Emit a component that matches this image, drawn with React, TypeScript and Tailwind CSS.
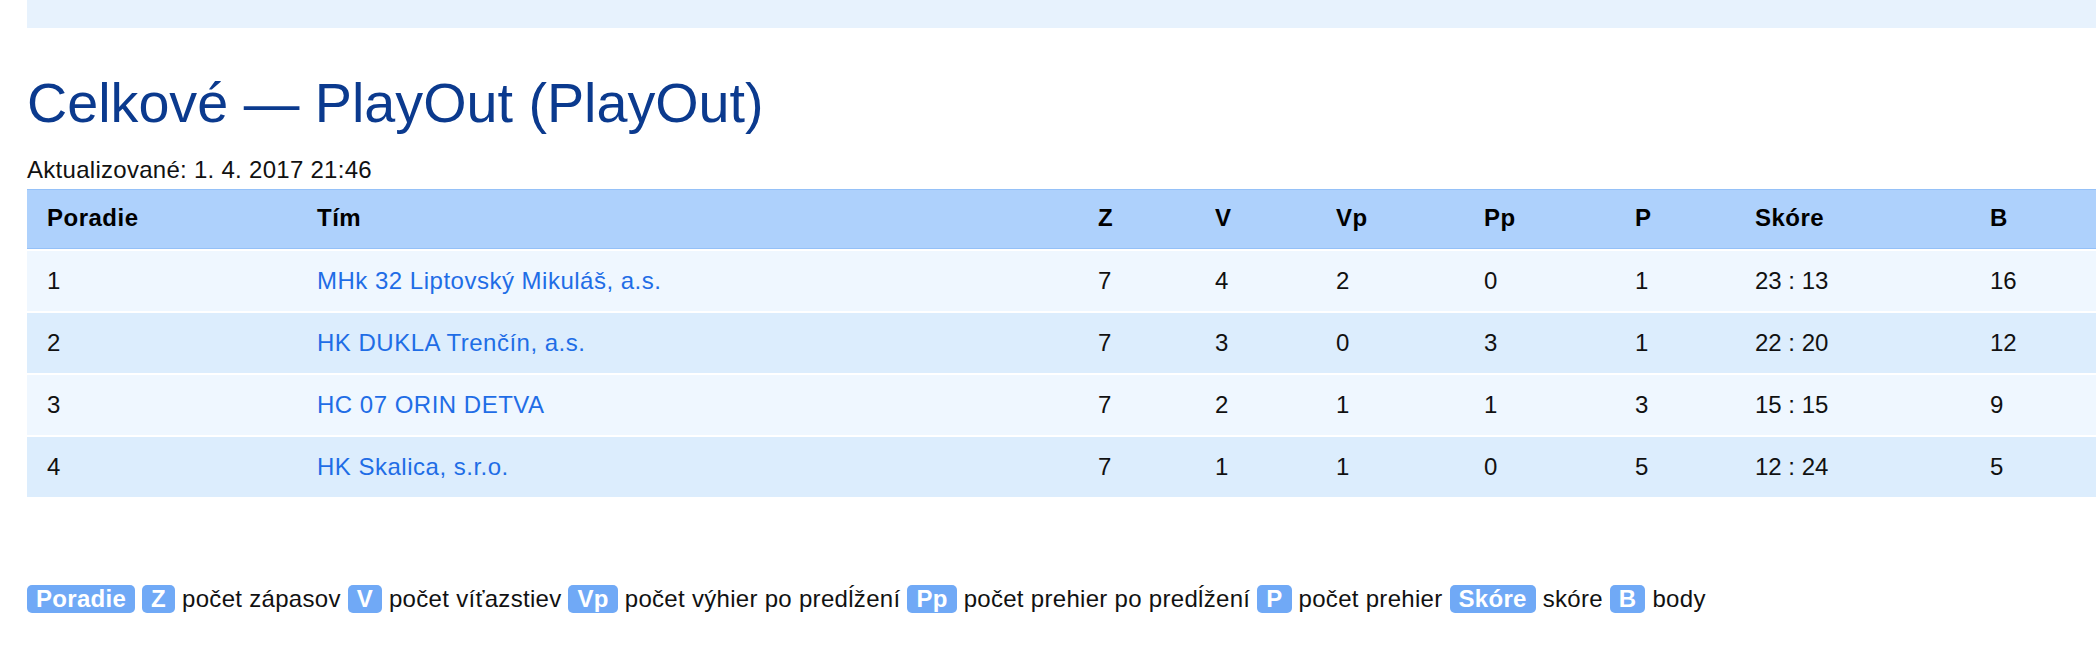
import React from "react";

type Row = { pos: number; team: string; z: number; v: number; vp: number; pp: number; p: number; score: string; b: number };

const rows: Row[] = [
  { pos: 1, team: "MHk 32 Liptovský Mikuláš, a.s.", z: 7, v: 4, vp: 2, pp: 0, p: 1, score: "23 : 13", b: 16 },
  { pos: 2, team: "HK DUKLA Trenčín, a.s.", z: 7, v: 3, vp: 0, pp: 3, p: 1, score: "22 : 20", b: 12 },
  { pos: 3, team: "HC 07 ORIN DETVA", z: 7, v: 2, vp: 1, pp: 1, p: 3, score: "15 : 15", b: 9 },
  { pos: 4, team: "HK Skalica, s.r.o.", z: 7, v: 1, vp: 1, pp: 0, p: 5, score: "12 : 24", b: 5 },
];

const legend: [string, string][] = [
  ["Poradie", ""],
  ["Z", "počet zápasov"],
  ["V", "počet víťazstiev"],
  ["Vp", "počet výhier po predĺžení"],
  ["Pp", "počet prehier po predĺžení"],
  ["P", "počet prehier"],
  ["Skóre", "skóre"],
  ["B", "body"],
];

const cols = ["Poradie", "Tím", "Z", "V", "Vp", "Pp", "P", "Skóre", "B"];

function Badge({ children }: { children: React.ReactNode }) {
  return (
    <span className="inline-block rounded-[5px] bg-[#70a9f6] px-[9px] py-[2px] font-bold leading-[24px] text-white">
      {children}
    </span>
  );
}

export default function App() {
  return (
    <div className="min-h-screen overflow-hidden bg-white pl-[27px] text-[24px] text-[#111] [font-family:'Liberation_Sans',Arial,sans-serif]">
      {/* nav strip, cut off at the top */}
      <div className="h-[28px] bg-[#e7f2fd]" />

      <h1 className="mt-[44px] text-[55.7px] font-normal leading-[62px] text-[#0b3a8e]">Celkové — PlayOut (PlayOut)</h1>
      <p className="mt-[20px] leading-[32px] tracking-[0.28px]">Aktualizované: 1. 4. 2017 21:46</p>

      <table className="mt-[3px] w-full table-fixed border-separate border-spacing-0">
        <colgroup>
          <col className="w-[270px]" />
          <col className="w-[781px]" />
          <col className="w-[117px]" />
          <col className="w-[121px]" />
          <col className="w-[148px]" />
          <col className="w-[151px]" />
          <col className="w-[120px]" />
          <col className="w-[235px]" />
          <col />
        </colgroup>
        <thead>
          <tr className="bg-[#aed1fc]">
            {cols.map((c) => (
              <th
                key={c}
                className="h-[60px] border-y border-[#95c1f8] px-[20px] pt-[1px] pb-[3px] text-left font-bold leading-[24px] tracking-[0.5px] text-black"
              >
                {c}
              </th>
            ))}
          </tr>
        </thead>
        <tbody>
          {rows.map((r, i) => (
            <tr key={r.pos} className={i % 2 === 0 ? "bg-[#eff7ff]" : "bg-[#dcedfd]"}>
              <td className="h-[62px] border-t-2 border-white px-[20px] leading-[24px]">{r.pos}</td>
              <td className="border-t-2 border-white px-[20px] leading-[24px]">
                <a href="#" className="tracking-[0.5px] text-[#1f6de6]">{r.team}</a>
              </td>
              <td className="border-t-2 border-white px-[20px]">{r.z}</td>
              <td className="border-t-2 border-white px-[20px]">{r.v}</td>
              <td className="border-t-2 border-white px-[20px]">{r.vp}</td>
              <td className="border-t-2 border-white px-[20px]">{r.pp}</td>
              <td className="border-t-2 border-white px-[20px]">{r.p}</td>
              <td className="border-t-2 border-white px-[20px]">{r.score}</td>
              <td className="border-t-2 border-white px-[20px]">{r.b}</td>
            </tr>
          ))}
        </tbody>
      </table>

      <p className="mt-[86px] leading-[32px] tracking-[0.3px]">
        {legend.map(([k, text]) => (
          <React.Fragment key={k}>
            <Badge>{k}</Badge> {text}
            {text && " "}
          </React.Fragment>
        ))}
      </p>
    </div>
  );
}
